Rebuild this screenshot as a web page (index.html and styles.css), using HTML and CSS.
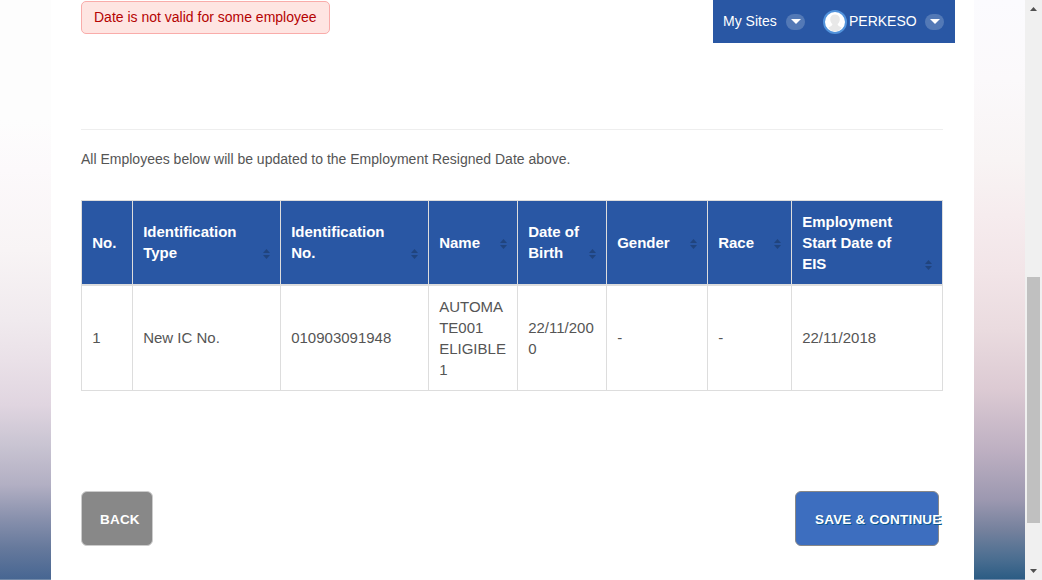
FILE: index.html
```html
<!DOCTYPE html>
<html lang="en">
<head>
<meta charset="utf-8">
<title>Employees</title>
<link rel="stylesheet" href="styles.css">
</head>
<body>
<div class="edge edge-left"></div>
<main class="page">
  <div class="top">
    <div class="alert">Date is not valid for some employee</div>
    <nav class="userbar">
      <span class="sites">My Sites</span>
      <span class="pill"><svg width="10" height="5" viewBox="0 0 10 5"><path d="M0 0h10L5 5z" fill="#fff"/></svg></span>
      <svg class="avatar" width="24" height="24" viewBox="0 0 24 24"><circle cx="12" cy="12" r="11" fill="#fff" stroke="#5293dc" stroke-width="2"/><path d="M12 4.500c-3 0-4.800 2-4.800 4.800 0 2 .9 3.800 2.200 4.800 0 1.500-1 2-4 3.300 1.500 2.600 4 4 6.600 4s5.100-1.400 6.600-4c-3-1.300-4-1.800-4-3.300 1.300-1 2.200-2.800 2.200-4.800 0-2.800-1.800-4.800-4.800-4.800z" fill="#e8e8e8"/></svg>
      <span class="user">PERKESO</span>
      <span class="pill"><svg width="10" height="5" viewBox="0 0 10 5"><path d="M0 0h10L5 5z" fill="#fff"/></svg></span>
    </nav>
  </div>
  <hr class="rule">
  <p class="note">All Employees below will be updated to the Employment Resigned Date above.</p>
  <table class="grid">
    <colgroup><col class="c-no"><col class="c-id"><col class="c-id"><col class="c-name"><col class="c-name"><col class="c-gender"><col class="c-race"><col class="c-start"></colgroup>
    <thead>
      <tr>
        <th>No.</th>
        <th><div class="head"><span>Identification Type</span><svg class="sort" viewBox="0 0 7 10"><path d="M0 4L3.500 0 7 4zM0 6h7L3.500 10z"/></svg></div></th>
        <th><div class="head"><span>Identification No.</span><svg class="sort" viewBox="0 0 7 10"><path d="M0 4L3.500 0 7 4zM0 6h7L3.500 10z"/></svg></div></th>
        <th><div class="head"><span>Name</span><svg class="sort" viewBox="0 0 7 10"><path d="M0 4L3.500 0 7 4zM0 6h7L3.500 10z"/></svg></div></th>
        <th><div class="head"><span>Date of Birth</span><svg class="sort" viewBox="0 0 7 10"><path d="M0 4L3.500 0 7 4zM0 6h7L3.500 10z"/></svg></div></th>
        <th><div class="head"><span>Gender</span><svg class="sort" viewBox="0 0 7 10"><path d="M0 4L3.500 0 7 4zM0 6h7L3.500 10z"/></svg></div></th>
        <th><div class="head"><span>Race</span><svg class="sort" viewBox="0 0 7 10"><path d="M0 4L3.500 0 7 4zM0 6h7L3.500 10z"/></svg></div></th>
        <th><div class="head"><span>Employment Start Date of EIS</span><svg class="sort" viewBox="0 0 7 10"><path d="M0 4L3.500 0 7 4zM0 6h7L3.500 10z"/></svg></div></th>
      </tr>
    </thead>
    <tbody>
      <tr><td>1</td><td>New IC No.</td><td>010903091948</td><td>AUTOMATE001 ELIGIBLE 1</td><td>22/11/2000</td><td>-</td><td>-</td><td>22/11/2018</td></tr>
    </tbody>
  </table>
  <div class="actions">
    <button class="btn btn-back">BACK</button>
    <button class="btn btn-save">SAVE &amp; CONTINUE</button>
  </div>
</main>
<div class="edge edge-right"></div>
<div class="scrollbar">
  <svg width="7" height="4" viewBox="0 0 7 4"><path d="M0 4L3.500 0 7 4z" fill="#505050"/></svg>
  <div class="thumb"></div>
  <svg width="7" height="4" viewBox="0 0 7 4"><path d="M0 0h7L3.500 4z" fill="#505050"/></svg>
</div>
</body>
</html>
```
FILE: styles.css
```css
* { box-sizing: border-box; }
body {
  margin: 0;
  width: 1042px;
  height: 580px;
  display: flex;
  overflow: hidden;
  background: #fff;
  color: #555;
  font-family: "Liberation Sans", Arial, sans-serif;
  font-size: 15px;
  line-height: 21px;
}
.edge { width: 51px; flex: none; border-bottom: 1px solid #7289a8; }
.edge-left {
  background: linear-gradient(#fdfdfd 0, #fdfdfd 120px, #fcf9fb 170px, #f8f4f5 250px, #f0eaee 320px, #eae1e8 360px, #e0d5e0 405px, #c9c4d2 445px, #b2afc3 485px, #8991ad 518px, #66799c 548px, #476692 579px);
}
.edge-right {
  background: linear-gradient(#fbfbfe 0, #fbf9fb 80px, #f8f4f4 160px, #f6ecee 215px, #f2e5e8 270px, #eadbdf 330px, #dccad3 390px, #beb0c2 450px, #9c98b0 500px, #75819d 530px, #496d90 560px, #2c5c84 579px);
}
.page { width: 923px; flex: none; padding: 0 31px 0 30px; }
.top { height: 129px; display: flex; justify-content: space-between; align-items: flex-start; }
.alert {
  width: 249px;
  height: 33px;
  margin-top: 1px;
  padding: 5px 0 0 12px;
  border: 1px solid #f9acaa;
  border-radius: 5px;
  background: #fee5e2;
  color: #b50303;
  font-size: 14px;
  white-space: nowrap;
}
.userbar {
  width: 242px;
  height: 43px;
  margin-right: -12px;
  padding: 0 10px;
  display: flex;
  align-items: center;
  background: #2957a4;
  color: #fff;
  font-size: 14px;
}
.sites { width: 63px; white-space: nowrap; }
.pill {
  width: 19px;
  height: 16px;
  border-radius: 8px;
  background: #5379b6;
  display: flex;
  align-items: center;
  justify-content: center;
}
.avatar { margin: 0 2px 0 18px; }
.user { width: 76px; }
.rule { height: 1px; margin: 0; border: 0; background: #eee; }
.note { margin: 19px 0 30px; font-size: 14px; }
.grid { width: 862px; table-layout: fixed; border-collapse: collapse; }
.c-no { width: 51px; }
.c-id { width: 148px; }
.c-name { width: 89px; }
.c-gender { width: 101px; }
.c-race { width: 84px; }
.c-start { width: 151px; }
.grid th, .grid td {
  border: 1px solid #ddd;
  padding: 9.8px 10px 10.2px 10.2px;
  text-align: left;
  vertical-align: middle;
  overflow-wrap: break-word;
}
.grid th { border-bottom-width: 2px; background: #2957a4; color: #fff; }
.head { display: flex; align-items: flex-end; justify-content: space-between; gap: 8px; }
.sort { width: 7px; height: 10px; margin-bottom: 4px; flex: none; fill: #20447e; }
.actions { margin-top: 100px; padding-right: 4px; display: flex; justify-content: space-between; }
.btn {
  height: 55px;
  padding: 2px 0 0 19px;
  border-radius: 6px;
  color: #fff;
  font: bold 13.5px/21px "Liberation Sans", Arial, sans-serif;
  letter-spacing: .2px;
  text-align: left;
  white-space: nowrap;
}
.btn-back { width: 72px; padding-left: 18px; border: 1px solid #ccc; background: #888; }
.btn-save { width: 144px; border: 1px solid #888; background: #3d6ebf; text-shadow: 1px 1px 0 #07568c; }
.scrollbar { width: 17px; background: #f0f0f0; display: flex; flex-direction: column; align-items: center; padding: 7px 0; }
.thumb { width: 13px; height: 246px; margin: 266px 0 auto; background: #c0c0c0; }
```
